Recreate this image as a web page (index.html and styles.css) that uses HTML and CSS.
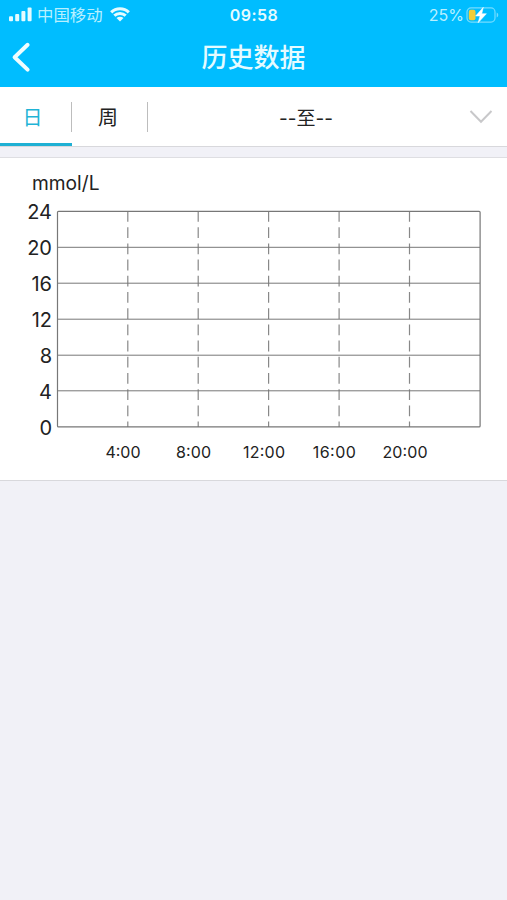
FILE: index.html
```html
<!DOCTYPE html>
<html lang="zh-CN">
<head>
    <meta charset="UTF-8">
    <meta name="viewport" content="width=device-width, initial-scale=1.0">
    <title>历史数据</title>
    <link rel="stylesheet" href="styles.css">
</head>
<body>
    <header class="header">
        <div class="status-bar">
            <div class="status-left">
                <svg class="signal" width="23" height="15" viewBox="0 0 23 15">
                    <rect x="0" y="9.3" width="4" height="5" rx="1"/>
                    <rect x="6.2" y="7" width="4" height="7.3" rx="1"/>
                    <rect x="12.4" y="4" width="4" height="10.3" rx="1"/>
                    <rect x="18.6" y="0.5" width="4" height="13.8" rx="1"/>
                </svg>
                <span class="carrier">中国移动</span>
                <svg class="wifi" width="20" height="15" viewBox="0 0 20 15">
                    <path d="M1.2 5.4C6 .4 14 .4 18.8 5.4M4.3 8.7C7.5 5.6 12.5 5.6 15.7 8.7"/>
                    <path class="wifi-dot" d="M6.5 11C8.5 9.2 11.5 9.2 13.5 11L10 14.6Z"/>
                </svg>
            </div>
            <span class="time">09:58</span>
            <div class="status-right">
                <span class="percent">25%</span>
                <svg class="battery" width="33" height="18" viewBox="0 0 33 18">
                    <rect class="battery-case" x="1" y="1.9" width="28" height="14.2" rx="4"/>
                    <path class="battery-tip" d="M30.7 6.6Q32.3 7.2 32.3 9T30.7 11.4Z"/>
                    <rect class="battery-level" x="2.8" y="3.8" width="6.7" height="10.4" rx="2"/>
                    <path class="battery-bolt" d="M17.3 1.3L9.6 10H14L12.1 16.8L20.4 7.7H15.8Z"/>
                </svg>
            </div>
        </div>
        <div class="nav-bar">
            <svg class="back" width="20" height="32" viewBox="0 0 20 32">
                <path d="M16.6 3.8L3.6 16.2L16.6 28.6"/>
            </svg>
            <h1>历史数据</h1>
        </div>
    </header>

    <div class="tabs">
        <div class="tab active">日</div>
        <div class="tab">周</div>
        <div class="range">
            <span>--至--</span>
            <svg class="arrow" width="24" height="16" viewBox="0 0 24 16">
                <path d="M1.5 2L12 12.7L22.5 2"/>
            </svg>
        </div>
    </div>

    <div class="card">
        <svg class="chart" width="507" height="322" viewBox="0 158 507 322">
            <text class="unit" x="32" y="189.5" textLength="67.5" lengthAdjust="spacingAndGlyphs">mmol/L</text>
            <g class="y-axis">
                <text x="52" y="218.6">24</text>
                <text x="52" y="254.6">20</text>
                <text x="52" y="290.6">16</text>
                <text x="52" y="326.6">12</text>
                <text x="52" y="362.6">8</text>
                <text x="52" y="398.6">4</text>
                <text x="52" y="434.6">0</text>
            </g>
            <path class="dashes" d="M127.8 211V427M198.2 211V427M268.6 211V427M339.1 211V427M409.5 211V427"/>
            <path class="lines" d="M57.5 247.3H480M57.5 283.2H480M57.5 319.2H480M57.5 355.2H480M57.5 390.8H480"/>
            <rect class="frame" x="57.5" y="211.3" width="422.6" height="215.6" rx="1"/>
            <g class="x-axis">
                <text x="123" y="458" textLength="35">4:00</text>
                <text x="193.5" y="458" textLength="35">8:00</text>
                <text x="264" y="458" textLength="42">12:00</text>
                <text x="334.3" y="458" textLength="43">16:00</text>
                <text x="405" y="458" textLength="45">20:00</text>
            </g>
        </svg>
    </div>
</body>
</html>
```
FILE: styles.css
```css
* {
    box-sizing: border-box;
}
body {
    margin: 0;
    min-height: 100vh;
    background: #f1f1f7;
    color: #222;
    font-family: Inter, "Noto Sans CJK SC", sans-serif;
}
svg {
    display: block;
    flex: none;
}
.header {
    height: 87px;
    background: #00bdff;
    color: #e5fbff;
}
.status-bar {
    display: grid;
    grid-template-columns: 1fr auto 1fr;
    align-items: center;
    height: 28px;
    padding: 0 8px 0 9px;
    font-size: 16px;
    line-height: 28px;
}
.status-left,
.status-right {
    display: flex;
    align-items: center;
}
.signal {
    fill: #e5fbff;
}
.carrier {
    margin: 1px 7px 0 5px;
    font-size: 16.4px;
    color: #b8f0ff;
}
.wifi {
    fill: none;
    stroke: #e5fbff;
    stroke-width: 3;
}
.wifi-dot {
    fill: #e5fbff;
    stroke: none;
}
.time {
    font-weight: 600;
    letter-spacing: 0.5px;
}
.status-right {
    justify-content: flex-end;
}
.percent {
    margin: 0 2px 0 0;
    color: #b8f0ff;
}
.battery-case {
    fill: none;
    stroke: #74dcff;
    stroke-width: 1.2;
}
.battery-tip {
    fill: #74dcff;
}
.battery-level {
    fill: #f3cd37;
}
.battery-bolt {
    fill: #fff;
    stroke: #fff;
    stroke-width: 0.5;
}
.nav-bar {
    display: grid;
    grid-template-columns: 40px 1fr 40px;
    align-items: center;
    height: 59px;
}
.back {
    margin: -2px 0 0 11px;
    fill: none;
    stroke: #f0fdff;
    stroke-width: 4;
    stroke-linecap: round;
    stroke-linejoin: round;
}
.nav-bar h1 {
    margin: 0;
    font-size: 26px;
    font-weight: 500;
    line-height: 40px;
    text-align: center;
}
.tabs {
    display: flex;
    height: 60px;
    background: #fff;
    border-bottom: 1px solid #d8d8dc;
}
.tab {
    position: relative;
    display: flex;
    align-items: center;
    justify-content: center;
    width: 76px;
    height: 59px;
    padding-right: 4px;
    font-size: 20px;
}
.tab:first-child {
    width: 72px;
    padding-top: 3px;
    padding-right: 7px;
}
/* divider on the right edge */
.tab::after {
    content: "";
    position: absolute;
    top: 15px;
    right: 0;
    width: 1.5px;
    height: 30px;
    background: #bdbdbd;
}
.tab.active {
    color: #1fb4d6;
    border-bottom: 3px solid #1fb0d4;
}
.range {
    display: flex;
    flex: 1;
    align-items: center;
    padding: 0 14px 0 0;
    font-size: 19px;
}
.range span {
    flex: 1;
    padding-right: 5px;
    text-align: center;
}
.arrow {
    fill: none;
    stroke: #c8c8ca;
    stroke-width: 2;
}
.card {
    margin-top: 10px;
    background: #fff;
    border-top: 1px solid #dedee2;
    border-bottom: 1px solid #d8d8dc;
}
.chart text {
    fill: #222;
}
.unit {
    font-size: 19.5px;
}
.y-axis {
    font-size: 20px;
    text-anchor: end;
}
.x-axis {
    font-size: 16px;
    text-anchor: middle;
}
.dashes {
    stroke: #888;
    stroke-width: 1.2;
    stroke-dasharray: 10.8 5.4;
}
.lines {
    stroke: #777;
    stroke-width: 1;
}
.frame {
    fill: none;
    stroke: #777;
    stroke-width: 1.2;
}
```
